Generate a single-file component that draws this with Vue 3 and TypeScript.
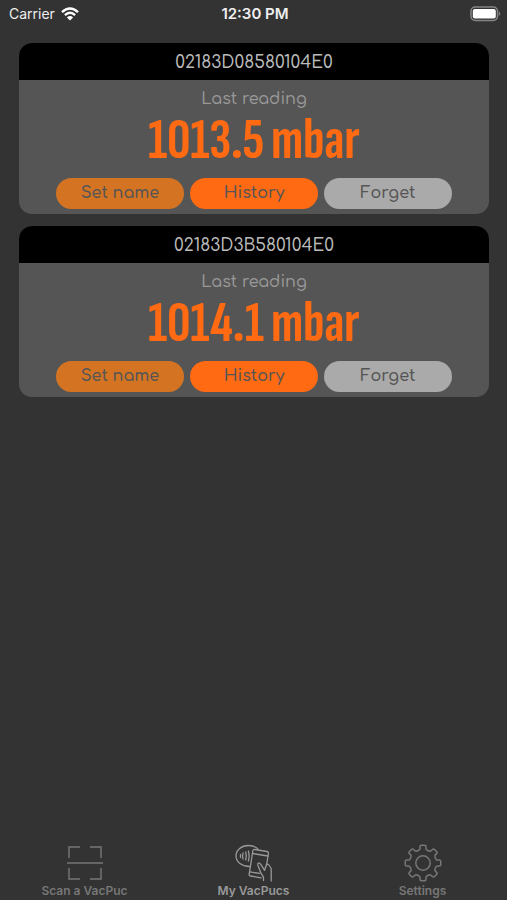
<script setup lang="ts">
interface Puc {
  id: string
  reading: string
}

const pucs: Puc[] = [
  { id: '02183D08580104E0', reading: '1013.5 mbar' },
  { id: '02183D3B580104E0', reading: '1014.1 mbar' },
]

// Outline of an eight-toothed gear, with every corner rounded off.
function gearPath(centre: number, outer: number, inner: number): string {
  const points: [number, number][] = []
  for (let tooth = 0; tooth < 8; tooth++) {
    const corners: [number, number][] = [
      [inner, -12.5],
      [outer, -9.5],
      [outer, 9.5],
      [inner, 12.5],
    ]
    for (const [radius, offset] of corners) {
      const angle = ((tooth * 45 + offset) * Math.PI) / 180
      points.push([centre + radius * Math.sin(angle), centre - radius * Math.cos(angle)])
    }
  }
  const near = (a: [number, number], b: [number, number]) => {
    const t = 1.5 / Math.hypot(b[0] - a[0], b[1] - a[1])
    return `${(a[0] + (b[0] - a[0]) * t).toFixed(2)} ${(a[1] + (b[1] - a[1]) * t).toFixed(2)}`
  }
  const count = points.length
  return (
    points
      .map((p, i) => {
        const before = points[(i + count - 1) % count]
        const after = points[(i + 1) % count]
        return `${i ? 'L' : 'M'}${near(p, before)}Q${p[0].toFixed(2)} ${p[1].toFixed(2)} ${near(p, after)}`
      })
      .join('') + 'Z'
  )
}

const gear = gearPath(19, 18, 13.6)
</script>

<template>
  <div class="screen">
    <header class="status">
      <div class="carrier">
        <span>Carrier</span>
        <svg width="18" height="14" viewBox="0 0 18 14" fill="none" stroke="#fff" stroke-width="2.4" aria-hidden="true">
          <path d="M1 5.2Q9-2.2 17 5.2" />
          <path d="M3.9 8.1Q9 3.4 14.1 8.1" />
          <path d="M9 13.6 5.9 10.4Q9 7.8 12.1 10.4Z" fill="#fff" stroke="none" />
        </svg>
      </div>
      <time class="time">12:30 PM</time>
      <svg class="battery" width="31" height="16" viewBox="0 0 31 16" aria-hidden="true">
        <rect x="1" y="1" width="26.5" height="13.4" rx="4.2" fill="none" stroke="#858585" stroke-width="1.5" />
        <rect x="2.8" y="3" width="23" height="9.4" rx="2" fill="#fff" />
        <path d="M28.8 5.3q3 2.4 0 4.8z" fill="#858585" />
      </svg>
    </header>

    <main class="list">
      <article v-for="puc in pucs" :key="puc.id" class="card">
        <h2 class="card-title">{{ puc.id }}</h2>
        <div class="card-body">
          <p class="caption">Last reading</p>
          <p class="reading">{{ puc.reading }}</p>
          <div class="actions">
            <button type="button" class="action rename">Set name</button>
            <button type="button" class="action history">History</button>
            <button type="button" class="action forget">Forget</button>
          </div>
        </div>
      </article>
    </main>

    <nav class="tabs">
      <a href="#scan" class="tab">
        <svg width="38" height="38" viewBox="0 0 38 38" fill="none" stroke="currentColor" stroke-width="1.4" aria-hidden="true">
          <path d="M3 14V3H14M24 3H35V14M35 24V35H24M14 35H3V24M1 19H37" />
        </svg>
        <span>Scan a VacPuc</span>
      </a>
      <a href="#pucs" class="tab active" aria-current="page">
        <svg width="38" height="38" viewBox="0 0 38 38" fill="none" stroke="currentColor" stroke-width="1.3" stroke-linecap="round" stroke-linejoin="round" aria-hidden="true">
          <path d="M14.500 22.500C7 22.500 1 18 1 12 1 6 6.500 1.500 13.500 1.500c4 0 7.500 1.300 9.500 3.700" />
          <path d="M5.500 10.500v3M8 9q-.8 3 0 6M10.700 8q1.200 4 0 8M13.400 7q1.600 5 0 10" />
          <path d="M26 33.800 15.500 32q-1.600-.3-1.300-1.900L17.800 7q.3-1.800 2-1.500L32 7.500q1.700.3 1.400 2L31.900 19" />
          <path d="m17.500 9.500 15.500 2.500M14.800 27.800l9.700 1.600" />
          <path d="M28.500 36.500v-3.200l-2.900-5-2.700-7c-.7-2.300 1.600-3 2.700-1.200l4 6.200M31.900 19.500q3.500 2 4.300 5.200v12.300M29.600 26.300l2.300-6.800" />
        </svg>
        <span>My VacPucs</span>
      </a>
      <a href="#settings" class="tab">
        <svg width="38" height="38" viewBox="0 0 38 38" fill="none" stroke="currentColor" stroke-width="1.5" aria-hidden="true">
          <path :d="gear" />
          <circle cx="19" cy="19" r="7.2" />
        </svg>
        <span>Settings</span>
      </a>
    </nav>
  </div>
</template>

<style>
body {
  background: #333;
}
</style>

<style scoped>
.screen {
  box-sizing: border-box;
  display: flex;
  flex-direction: column;
  min-height: 100vh;
  background: #333;
  color: #fff;
  font-family: Inter, "Liberation Sans", sans-serif;
}

.status {
  display: grid;
  grid-template-columns: 1fr auto 1fr;
  align-items: center;
  height: 27px;
  padding: 0 6px 0 9px;
  color: #eee;
  font-size: 14px;
}

.carrier {
  display: flex;
  align-items: center;
  gap: 6px;
}

.time {
  font-size: 15px;
  font-weight: 600;
}

.battery {
  justify-self: end;
}

.list {
  display: flex;
  flex: 1;
  flex-direction: column;
  gap: 12px;
  padding: 16px 18px 16px 19px;
}

.card {
  overflow: hidden;
  border-radius: 13px;
  background: #555;
  font-family: Comfortaa, Quicksand, Lato, sans-serif;
  text-align: center;
}

.card-title {
  margin: 0;
  padding-top: 2px;
  background: #000;
  color: #bbb;
  font-size: 17px;
  font-weight: 500;
  line-height: 35px;
}

.card-body {
  padding: 7px 0 5px;
}

.caption {
  margin: 0;
  color: #999;
  font-size: 16px;
  font-weight: 500;
  line-height: 24px;
}

.reading {
  margin: 0;
  color: #ff6a13;
  font-family: "DIN Condensed", "Sofia Sans Extra Condensed", "Roboto Condensed", sans-serif;
  font-size: 58px;
  font-weight: 700;
  line-height: 60px;
}

.actions {
  display: flex;
  justify-content: center;
  gap: 6px;
  padding-top: 7px;
}

.action {
  flex: 0 1 128px;
  height: 31px;
  padding: 0 0 2px;
  border: 0;
  border-radius: 16px;
  color: #555;
  font: inherit;
  font-size: 16px;
  font-weight: 600;
}

.rename {
  background: #d47423;
}

.history {
  background: #ff6a13;
}

.forget {
  background: #aaa;
}

.tabs {
  display: grid;
  grid-template-columns: repeat(3, 1fr);
}

.tab {
  display: flex;
  flex-direction: column;
  align-items: center;
  gap: 1px;
  padding-bottom: 1px;
  color: #777;
  font-size: 12px;
  font-weight: 600;
  line-height: 16px;
  text-decoration: none;
}

.active {
  color: #999;
}
</style>
